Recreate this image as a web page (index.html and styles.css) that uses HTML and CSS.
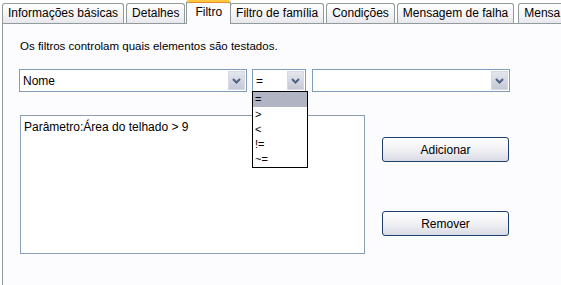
FILE: index.html
```html
<!DOCTYPE html>
<html lang="pt">
<head>
    <meta charset="UTF-8">
    <title>Filtro</title>
    <link rel="stylesheet" href="styles.css">
</head>
<body>

    <!-- Tab strip -->
    <div class="tabs">
        <div class="tab">Informações básicas</div>
        <div class="tab">Detalhes</div>
        <div class="tab active">Filtro</div>
        <div class="tab">Filtro de família</div>
        <div class="tab">Condições</div>
        <div class="tab">Mensagem de falha</div>
        <div class="tab last">Mensa</div>
    </div>

    <!-- Filter page -->
    <div class="panel">
        <div class="desc">Os filtros controlam quais elementos são testados.</div>

        <div class="combo-row">
            <div class="combo wide">
                <span class="value">Nome</span>
                <span class="arrow"><svg width="9" height="6" viewBox="0 0 9 6"><path d="M1 1 L4.5 4.5 L8 1" fill="none" stroke="#4d6185" stroke-width="2"/></svg></span>
            </div>
            <div class="combo small">
                <span class="value">=</span>
                <span class="arrow"><svg width="9" height="6" viewBox="0 0 9 6"><path d="M1 1 L4.5 4.5 L8 1" fill="none" stroke="#4d6185" stroke-width="2"/></svg></span>
                <!-- open list -->
                <ul class="dropdown">
                    <li class="selected">=</li>
                    <li>&gt;</li>
                    <li>&lt;</li>
                    <li>!=</li>
                    <li>~=</li>
                </ul>
            </div>
            <div class="combo value-box">
                <span class="value"></span>
                <span class="arrow"><svg width="9" height="6" viewBox="0 0 9 6"><path d="M1 1 L4.5 4.5 L8 1" fill="none" stroke="#4d6185" stroke-width="2"/></svg></span>
            </div>
        </div>

        <div class="body-row">
            <div class="listbox">
                <div class="item">Parâmetro:Área do telhado &gt; 9</div>
            </div>
            <div class="buttons">
                <button class="btn">Adicionar</button>
                <button class="btn">Remover</button>
            </div>
        </div>
    </div>

</body>
</html>
```

FILE: styles.css
```css
body {
    margin: 0;
    padding: 0;
    width: 561px;
    height: 285px;
    overflow: hidden;
    background: #ffffff;
    font-family: Tahoma, "Liberation Sans", Arial, sans-serif;
    font-size: 11px;
    color: #000;
}

/* Tabs */
.tabs {
    display: flex;
    align-items: flex-end;
    height: 24px;
    padding-left: 2px;
    position: relative;
    z-index: 1;
    white-space: nowrap;
}
.tab {
    height: 19px;
    line-height: 19px;
    padding: 0 5px;
    margin-right: 2px;
    margin-bottom: 1px;
    border: 1px solid #919b9c;
    border-bottom: none;
    border-radius: 3px 3px 0 0;
    background: linear-gradient(#fefefe, #f4f4f6 60%, #e6e6ec);
    font-size: 12px;
    flex-shrink: 0;
}
.tab.active {
    margin: 0 0 0 -1px;
    padding: 0 8px;
    border-top: 2px solid #ffc83c;
    box-shadow: inset 0 1px 0 #e68b2c;
    background: #fcfcfe;
    height: 22px;
    line-height: 21px;
}
.tab.active + .tab {
    margin-left: -1px;
}
.tab.last {
    margin-left: 2px;
}

/* Panel */
.panel {
    margin-left: 2px;
    margin-top: -1px;
    border-top: 1px solid #919b9c;
    border-left: 1px solid #919b9c;
    background: #fcfcfe;
    height: 270px;
    padding: 15px 0 0 17px;
    box-sizing: border-box;
}

.desc {
    font-size: 11.5px;
    height: 14px;
    line-height: 14px;
}

/* Combo boxes */
.combo-row {
    display: flex;
    margin-top: 16px;
}
.combo {
    position: relative;
    display: flex;
    align-items: center;
    height: 23px;
    box-sizing: border-box;
    border: 1px solid #7f9db9;
    background: #fff;
    font-size: 12px;
}
.combo .value {
    flex: 1;
    padding-left: 3px;
}
.combo .arrow {
    width: 17px;
    height: 19px;
    margin-right: 1px;
    display: flex;
    align-items: center;
    justify-content: center;
    background: linear-gradient(#e4e6ee, #c6c9d6);
    border: 1px solid #d6d9e4;
    box-sizing: border-box;
}
.combo.wide {
    width: 228px;
    margin-left: -1px;
}
.combo.small {
    width: 54px;
    margin-left: 5px;
}
.combo.value-box {
    width: 198px;
    margin-left: 6px;
}

/* Open dropdown list */
.dropdown {
    position: absolute;
    top: 21px;
    left: -1px;
    width: 54px;
    margin: 0;
    padding: 0;
    list-style: none;
    border: 1px solid #000;
    background: #fff;
    font-size: 11px;
    z-index: 2;
}
.dropdown li {
    height: 15px;
    line-height: 15px;
    padding-left: 2px;
}
.dropdown li.selected {
    background: #b1b4c2;
}

/* List + buttons */
.body-row {
    display: flex;
    margin-top: 23px;
}
.listbox {
    width: 345px;
    height: 139px;
    box-sizing: border-box;
    border: 1px solid #8a9fb4;
    background: #fff;
    font-family: "Liberation Sans", Arial, sans-serif;
    font-size: 12px;
}
.listbox .item {
    padding: 4px 0 0 3px;
}
.buttons {
    display: flex;
    flex-direction: column;
    margin-left: 17px;
    padding-top: 22px;
    gap: 49px;
}
.btn {
    width: 127px;
    height: 25px;
    border: 1px solid #1c3f6e;
    border-radius: 3px;
    background: linear-gradient(#ffffff, #f1f1f5 50%, #d9dae4);
    font-family: Tahoma, "Liberation Sans", Arial, sans-serif;
    font-size: 12px;
    color: #000;
    padding: 0;
}
```
